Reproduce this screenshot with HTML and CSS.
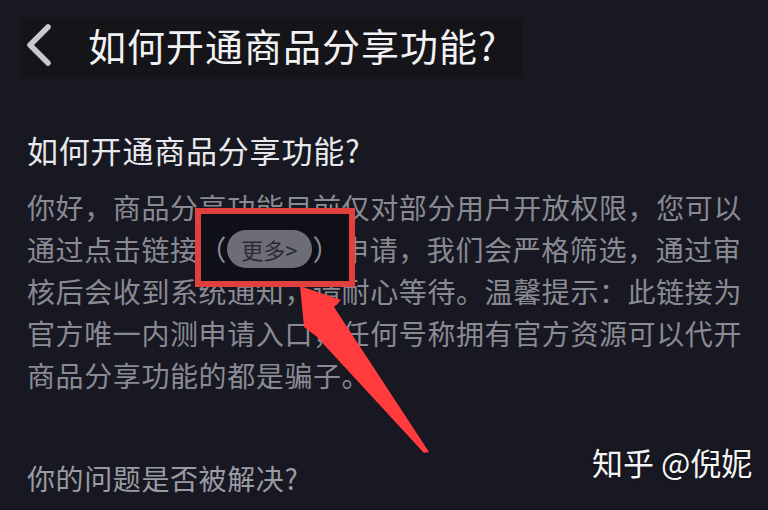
FILE: index.html
```html
<!DOCTYPE html>
<html lang="zh-CN">
<head>
<meta charset="utf-8">
<title>如何开通商品分享功能?</title>
<link rel="stylesheet" href="styles.css">
</head>
<body>
<div class="page">
  <header class="header">
    <svg class="back" width="30" height="42" viewBox="0 0 30 42">
      <path d="M25 3 L7 21 L25 39" fill="none" stroke="#c9c9ce" stroke-width="5.5" stroke-linecap="round" stroke-linejoin="round"/>
    </svg>
    <h1 class="title">如何开通商品分享功能?</h1>
  </header>
  <main class="content">
    <h2 class="heading">如何开通商品分享功能?</h2>
    <p class="text">你好，商品分享功能目前仅对部分用户开放权限，您可以<br>通过点击链接<span class="mark"><span class="box"></span>（<span class="pill">更多&gt;</span>）</span>申请，我们会严格筛选，通过审<br>核后会收到系统通知，请耐心等待。温馨提示：此链接为<br>官方唯一内测申请入口，任何号称拥有官方资源可以代开<br>商品分享功能的都是骗子。</p>
    <p class="question">你的问题是否被解决?</p>
  </main>
  <div class="watermark">知乎 @倪妮</div>
  <svg class="arrow" width="768" height="510" viewBox="0 0 768 510">
    <polygon points="300,286 341,300 334,307 429,452 424,453 316,336 304,327" fill="#ff3b3e"/>
  </svg>
</div>
</body>
</html>
```
FILE: styles.css
```css
html, body {
  margin: 0;
  padding: 0;
  background: #171822;
}
body {
  font-family: "Noto Sans CJK SC", "Noto Sans", sans-serif;
}
.page {
  position: relative;
  width: 768px;
  height: 510px;
  overflow: hidden;
  background: #171822;
}
.header {
  display: flex;
  align-items: center;
  height: 60px;
  margin: 18px 0 0 20px;
  width: 502px;
  padding: 0 0 6px 2px;
  box-sizing: border-box;
  background: #141419;
}
.back {
  flex: none;
  margin-left: 1px;
}
.title {
  margin: 0 0 0 35px;
  font-size: 38px;
  font-weight: 400;
  letter-spacing: 1px;
  line-height: 44px;
  color: #f2f2f4;
  white-space: nowrap;
}
.content {
  padding-left: 27px;
}
.heading {
  margin: 50px 0 0;
  font-size: 31px;
  font-weight: 400;
  letter-spacing: 0.8px;
  line-height: 44px;
  color: #e9e9ec;
}
.text {
  margin: 14px 0 0;
  font-size: 28px;
  letter-spacing: 0.6px;
  line-height: 42px;
  color: #8a8a93;
  white-space: nowrap;
}
.mark {
  position: relative;
  z-index: 1;
  display: inline-block;
  height: 42px;
  vertical-align: top;
  color: #8a8a93;
}
.box {
  position: absolute;
  z-index: -1;
  left: -4px;
  top: -20px;
  width: 160px;
  height: 79px;
  box-sizing: border-box;
  border: 6px solid #e2403f;
  background: #0f0f17;
}
.pill {
  display: inline-block;
  vertical-align: top;
  margin-top: 2px;
  height: 38px;
  line-height: 38px;
  padding: 0 15px 0 14px;
  border-radius: 19px;
  background: #6d6d77;
  color: #2a2a32;
  font-size: 22px;
  letter-spacing: 0;
}
.question {
  margin: 61px 0 0;
  font-size: 28px;
  letter-spacing: 0.6px;
  line-height: 42px;
  color: #9b9ba2;
}
.watermark {
  position: absolute;
  left: 592px;
  top: 440px;
  font-size: 31px;
  line-height: 44px;
  color: #f4f4f4;
  white-space: nowrap;
  text-shadow: 0 0 2px rgba(0,0,0,0.6);
}
.arrow {
  position: absolute;
  left: 0;
  top: 0;
  pointer-events: none;
  filter: blur(0.5px);
}
```
